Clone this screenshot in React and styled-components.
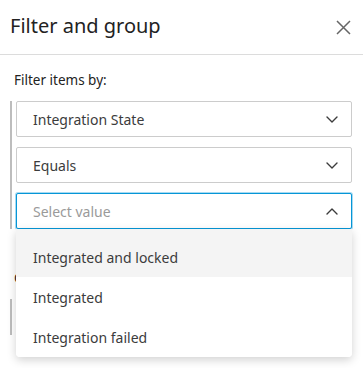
import React from "react";
import styled, { createGlobalStyle } from "styled-components";

const Global = createGlobalStyle`
  html, body { margin: 0; padding: 0; background: #fff; }
  body { font-family: "Noto Sans", "Open Sans", sans-serif; color: #3c3c3c; }
  * { box-sizing: border-box; }
`;

const Panel = styled.div`
  width: 363px;
  height: 368px;
  overflow: hidden;
  background: #fff;
`;

const Header = styled.div`
  height: 55px;
  display: flex;
  align-items: center;
  justify-content: space-between;
  padding: 0 12px 0 10px;
  border-bottom: 1px solid #dcdcdc;
`;

const Title = styled.h1`
  margin: 0;
  font-size: 20px;
  font-weight: 400;
  color: #222;
  line-height: 1;
  padding-bottom: 2px;
`;

const CloseButton = styled.button`
  border: 0;
  background: transparent;
  padding: 0;
  width: 16px;
  height: 16px;
  display: flex;
  align-items: center;
  justify-content: center;
  cursor: pointer;
`;

const Body = styled.div`
  padding: 15px 11px 0 14px;
`;

const Label = styled.div`
  font-size: 13.5px;
  line-height: 20px;
  color: #222;
  margin-top: ${(p) => p.$top || 0}px;
`;

const Group = styled.div`
  margin: 11px 0 0 -4px;
  padding-left: 4px;
  border-left: 2px solid #bdbdbd;
  display: flex;
  flex-direction: column;
  gap: 10px;
`;

const SelectWrap = styled.div`
  position: relative;
`;

const SelectBox = styled.div`
  height: 36px;
  display: flex;
  align-items: center;
  justify-content: space-between;
  padding: 0 13px 0 16px;
  border: 1px solid ${(p) => (p.$open ? "#0696d7" : "#cccccc")};
  box-shadow: ${(p) => (p.$open ? "0 0 0 1px rgba(6,150,215,0.35)" : "none")};
  border-radius: 2px;
  background: #fff;
  font-size: 14px;
  color: ${(p) => (p.$placeholder ? "#9a9a9a" : "#3c3c3c")};
`;

const Menu = styled.ul`
  position: absolute;
  top: 100%;
  left: 0;
  right: 0;
  margin: 0;
  padding: 0;
  list-style: none;
  background: #fff;
  border-radius: 0 0 4px 4px;
  box-shadow: 0 3px 10px rgba(0, 0, 0, 0.18);
  z-index: 10;
  overflow: hidden;
`;

const Item = styled.li`
  height: ${(p) => (p.$first ? 48 : 40)}px;
  padding: ${(p) => (p.$first ? "8px" : "0")} 16px 0 17px;
  display: flex;
  align-items: center;
  font-size: 14px;
  color: #3c3c3c;
  background: ${(p) => (p.$active ? "#f4f4f4" : "#fff")};
`;

const Chevron = ({ up }) => (
  <svg width="12" height="7" viewBox="0 0 12 7" fill="none">
    <path
      d={up ? "M1 6 L6 1 L11 6" : "M1 1 L6 6 L11 1"}
      stroke="#3c3c3c"
      strokeWidth="1.4"
      strokeLinecap="round"
      strokeLinejoin="round"
    />
  </svg>
);

const Select = ({ value, placeholder, open, children }) => (
  <SelectWrap>
    <SelectBox $open={open} $placeholder={!value}>
      <span>{value || placeholder}</span>
      <Chevron up={open} />
    </SelectBox>
    {children}
  </SelectWrap>
);

export default function App() {
  const options = ["Integrated and locked", "Integrated", "Integration failed"];
  return (
    <>
      <Global />
      <Panel>
        <Header>
          <Title>Filter and group</Title>
          <CloseButton aria-label="Close">
            <svg width="15" height="15" viewBox="0 0 15 15">
              <path d="M1 1 L14 14 M14 1 L1 14" stroke="#666" strokeWidth="1.5" />
            </svg>
          </CloseButton>
        </Header>
        <Body>
          <Label>Filter items by:</Label>
          <Group>
            <Select value="Integration State" />
            <Select value="Equals" />
            <Select placeholder="Select value" open>
              <Menu>
                {options.map((o, i) => (
                  <Item key={o} $first={i === 0} $active={i === 0}>
                    {o}
                  </Item>
                ))}
              </Menu>
            </Select>
          </Group>
          <Label $top={39}>Group items by:</Label>
          <Group>
            <Select placeholder="Select field" />
          </Group>
        </Body>
      </Panel>
    </>
  );
}
